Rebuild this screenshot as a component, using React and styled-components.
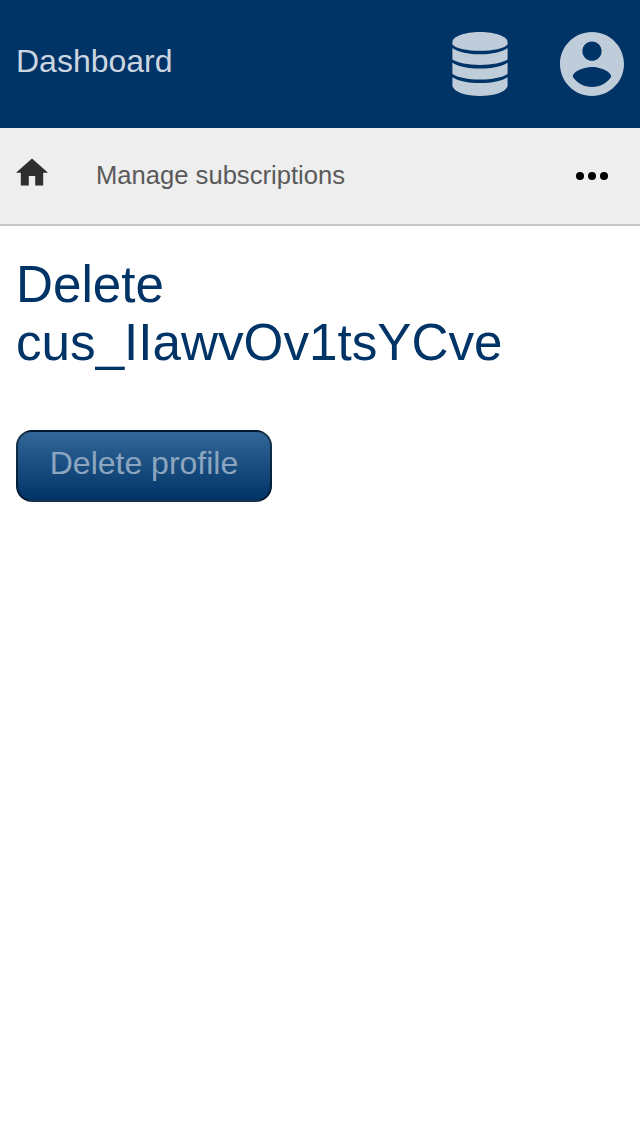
import React from 'react';
import styled, { createGlobalStyle } from 'styled-components';

const GlobalStyle = createGlobalStyle`
  *, *::before, *::after { box-sizing: border-box; }
  body {
    margin: 0;
    background: #fff;
    font-family: "Liberation Sans", Arial, sans-serif;
  }
  svg { display: block; }
`;

const Header = styled.header`
  display: flex;
  align-items: center;
  height: 128px;
  padding: 0 16px;
  background: #003366;
  color: #bfccd9;
`;

const Brand = styled.span`
  margin: 0 auto 6px 0;
  font-size: 32px;
  line-height: 36px;
  color: #ccd6e0;
`;

const HeaderIcons = styled.div`
  display: flex;
  gap: 48px;
`;

const HeaderIcon = styled.svg`
  width: 64px;
  height: 64px;
  fill: currentColor;
`;

const NavBar = styled.nav`
  display: flex;
  align-items: center;
  height: 98px;
  padding: 0 32px 2px 16px;
  background: #eee;
  border-bottom: 2px solid #c8c8c8;
`;

const HomeIcon = styled.svg`
  width: 32px;
  height: 28px;
  margin: 0 48px 6px 0;
  fill: #2e2e2e;
`;

const NavLink = styled.span`
  margin-right: auto;
  font-size: 25.6px;
  line-height: 30px;
  color: #5a5a5a;
`;

const Dots = styled.svg`
  width: 32px;
  height: 8px;
  margin-top: 2px;
`;

const Main = styled.main`
  padding: 30px 16px;
`;

const Title = styled.h1`
  margin: 0 0 58px;
  font-size: 51.2px;
  font-weight: 400;
  line-height: 58px;
  color: #003366;
`;

const Button = styled.button`
  display: block;
  width: 256px;
  height: 72px;
  padding: 0 0 6px;
  border: 2px solid rgba(0, 0, 0, 0.5);
  border-radius: 16px;
  background: linear-gradient(#336699, #003366);
  font: 32px/36px "Liberation Sans", Arial, sans-serif;
  color: #8ca6bf;
`;

export default function App() {
  return (
    <>
      <GlobalStyle />
      <Header>
        <Brand>Dashboard</Brand>
        <HeaderIcons>
          <HeaderIcon viewBox="0 0 64 64">
            <path d="M4.400 10C4.400 4.500 16.500 0 32 0s27.600 4.500 27.600 10v2.500C56 16.500 45 18.800 32 18.800S8 16.500 4.400 12.500z" />
            <path d="M4.400 16C10 20 20 22.300 32 22.300S54 20 59.600 16v11.500C54 31 44 32.900 32 32.900S10 31 4.400 27.500z" />
            <path d="M4.400 30.700C10 34.500 20 36.500 32 36.500S54 34.500 59.600 30.700v11.200C54 45.500 44 47.400 32 47.400S10 45.500 4.400 41.900z" />
            <path d="M4.400 45.200C10 49 20 51 32 51S54 49 59.600 45.200v9.100C57 60.500 46 64 32 64S7 60.500 4.400 54.300z" />
          </HeaderIcon>
          <HeaderIcon viewBox="2 2 20 20">
            <path d="M12 2C6.480 2 2 6.480 2 12s4.480 10 10 10 10-4.480 10-10S17.520 2 12 2zm0 3c1.660 0 3 1.340 3 3s-1.340 3-3 3-3-1.340-3-3 1.340-3 3-3zm0 14.200c-2.500 0-4.710-1.280-6-3.220.03-1.990 4-3.080 6-3.080 1.990 0 5.970 1.090 6 3.080-1.290 1.940-3.500 3.220-6 3.220z" />
          </HeaderIcon>
        </HeaderIcons>
      </Header>
      <NavBar>
        <HomeIcon viewBox="2 2.750 20 17.500">
          <path d="M10 20v-6h4v6h5v-8h3L12 3 2 12h3v8z" />
        </HomeIcon>
        <NavLink>Manage subscriptions</NavLink>
        <Dots viewBox="0 0 32 8">
          <circle cx="4" cy="4" r="4" />
          <circle cx="16" cy="4" r="4" />
          <circle cx="28" cy="4" r="4" />
        </Dots>
      </NavBar>
      <Main>
        <Title>
          Delete
          <br />
          cus_IIawvOv1tsYCve
        </Title>
        <Button type="button">Delete profile</Button>
      </Main>
    </>
  );
}
